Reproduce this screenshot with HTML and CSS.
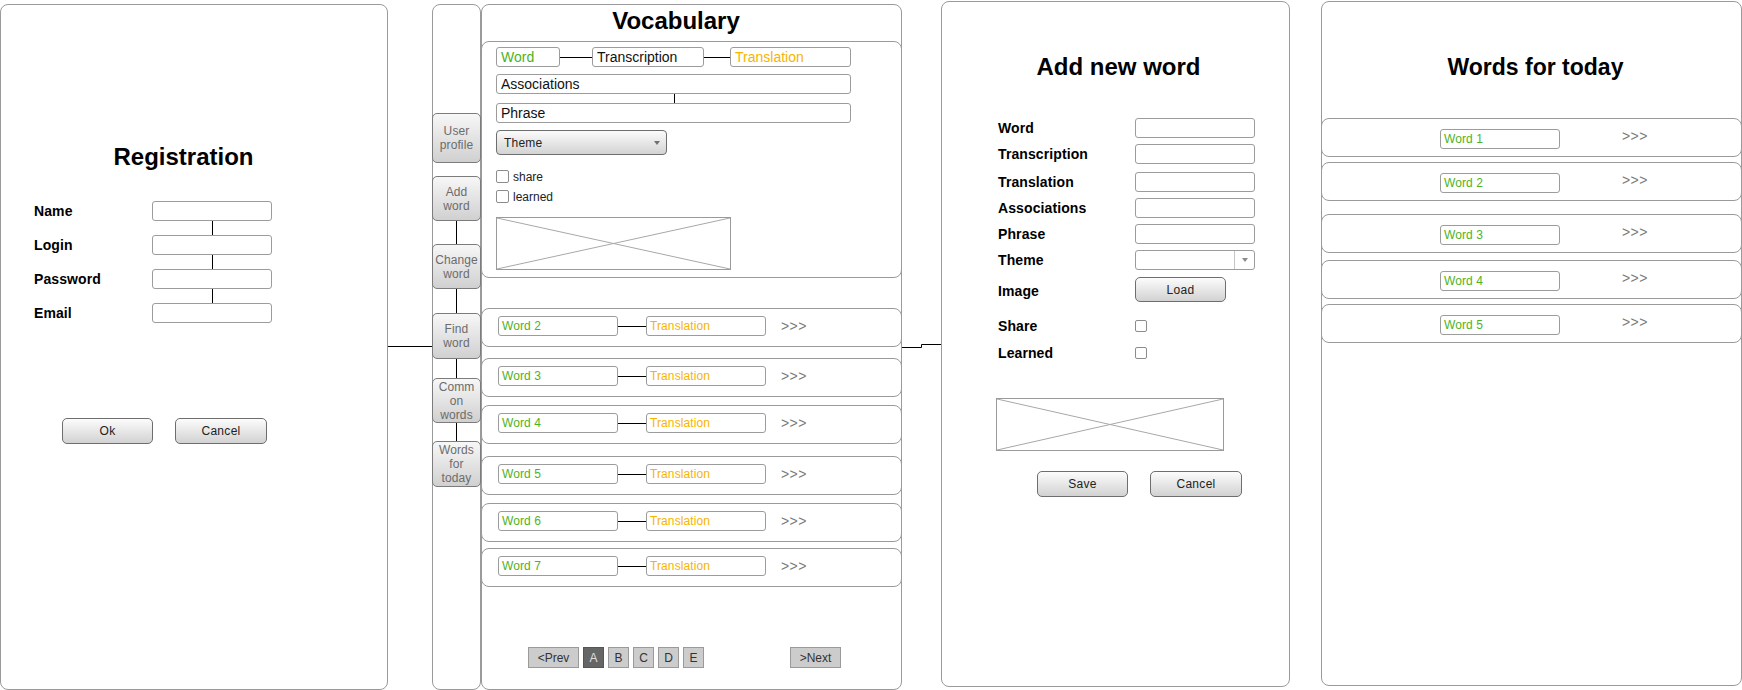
FILE: index.html
```html
<!DOCTYPE html>
<html>
<head>
<meta charset="utf-8">
<title>Vocabulary wireframe</title>
<link rel="stylesheet" href="styles.css">
</head>
<body>
<div class="canvas">

  <section class="panel reg">
    <h1 class="title reg-title">Registration</h1>
    <div class="reg-form">
      <span class="lbl">Name</span><div class="field"></div>
      <span class="lbl">Login</span><div class="field linked"></div>
      <span class="lbl">Password</span><div class="field linked"></div>
      <span class="lbl">Email</span><div class="field linked"></div>
    </div>
    <div class="reg-btns">
      <div class="btn">Ok</div>
      <div class="btn">Cancel</div>
    </div>
  </section>

  <nav class="panel nav">
    <div class="nav-btn nb1">User<br>profile</div>
    <div class="nav-btn nb2">Add<br>word</div>
    <div class="nav-btn nb3 linked">Change<br>word</div>
    <div class="nav-btn nb4 linked">Find<br>word</div>
    <div class="nav-btn nb5 linked">Comm<br>on<br>words</div>
    <div class="nav-btn nb6 linked">Words<br>for<br>today</div>
  </nav>

  <section class="panel vocab">
    <h1 class="title vocab-title">Vocabulary</h1>
    <div class="card edit-card">
      <div class="row1">
        <div class="inp big w64 green">Word</div>
        <div class="hline w32"></div>
        <div class="inp big w112">Transcription</div>
        <div class="hline w26"></div>
        <div class="inp big w121 orange">Translation</div>
      </div>
      <div class="inp big w355 assoc">Associations</div>
      <div class="vline"></div>
      <div class="inp big w355">Phrase</div>
      <div class="select"><span>Theme</span><span class="tri"></span></div>
      <div class="check share"><span class="cb"></span><span>share</span></div>
      <div class="check learned"><span class="cb"></span><span>learned</span></div>
      <div class="ph ph-vocab">
        <svg viewBox="0 0 235 53" preserveAspectRatio="none"><line x1="0" y1="0" x2="235" y2="53"/><line x1="0" y1="53" x2="235" y2="0"/></svg>
      </div>
    </div>

    <div class="word-list">
      <div class="card wrow"><div class="inp sm green">Word 2</div><div class="hline w28"></div><div class="inp sm orange">Translation</div><span class="arrows">&gt;&gt;&gt;</span></div>
      <div class="card wrow"><div class="inp sm green">Word 3</div><div class="hline w28"></div><div class="inp sm orange">Translation</div><span class="arrows">&gt;&gt;&gt;</span></div>
      <div class="card wrow"><div class="inp sm green">Word 4</div><div class="hline w28"></div><div class="inp sm orange">Translation</div><span class="arrows">&gt;&gt;&gt;</span></div>
      <div class="card wrow"><div class="inp sm green">Word 5</div><div class="hline w28"></div><div class="inp sm orange">Translation</div><span class="arrows">&gt;&gt;&gt;</span></div>
      <div class="card wrow"><div class="inp sm green">Word 6</div><div class="hline w28"></div><div class="inp sm orange">Translation</div><span class="arrows">&gt;&gt;&gt;</span></div>
      <div class="card wrow"><div class="inp sm green">Word 7</div><div class="hline w28"></div><div class="inp sm orange">Translation</div><span class="arrows">&gt;&gt;&gt;</span></div>
    </div>

    <div class="pager">
      <div class="pg wide">&lt;Prev</div>
      <div class="pg on">A</div>
      <div class="pg">B</div>
      <div class="pg">C</div>
      <div class="pg">D</div>
      <div class="pg">E</div>
      <div class="pg wide next">&gt;Next</div>
    </div>
  </section>

  <section class="panel add">
    <h1 class="title add-title">Add new word</h1>
    <div class="add-form">
      <div class="frow"><span class="lbl">Word</span><div class="field"></div></div>
      <div class="frow"><span class="lbl">Transcription</span><div class="field"></div></div>
      <div class="frow r-tr"><span class="lbl">Translation</span><div class="field"></div></div>
      <div class="frow"><span class="lbl">Associations</span><div class="field"></div></div>
      <div class="frow"><span class="lbl">Phrase</span><div class="field"></div></div>
      <div class="frow"><span class="lbl">Theme</span><div class="combo"><span class="combo-btn"><span class="tri"></span></span></div></div>
      <div class="frow r-img"><span class="lbl img-lbl">Image</span><div class="btn load">Load</div></div>
      <div class="frow r-share"><span class="lbl">Share</span><span class="cb cb12"></span></div>
      <div class="frow r-learned"><span class="lbl">Learned</span><span class="cb cb12"></span></div>
    </div>
    <div class="ph ph-add">
      <svg viewBox="0 0 227 52" preserveAspectRatio="none"><line x1="0" y1="0" x2="227" y2="52"/><line x1="0" y1="52" x2="227" y2="0"/></svg>
    </div>
    <div class="add-btns">
      <div class="btn save">Save</div>
      <div class="btn cancel">Cancel</div>
    </div>
  </section>

  <section class="panel today">
    <h1 class="title today-title">Words for today</h1>
    <div class="today-list">
      <div class="card trow"><div class="inp sm green">Word 1</div><span class="arrows">&gt;&gt;&gt;</span></div>
      <div class="card trow"><div class="inp sm green">Word 2</div><span class="arrows">&gt;&gt;&gt;</span></div>
      <div class="card trow"><div class="inp sm green">Word 3</div><span class="arrows">&gt;&gt;&gt;</span></div>
      <div class="card trow"><div class="inp sm green">Word 4</div><span class="arrows">&gt;&gt;&gt;</span></div>
      <div class="card trow"><div class="inp sm green">Word 5</div><span class="arrows">&gt;&gt;&gt;</span></div>
    </div>
  </section>

  <svg class="wires" width="1742" height="690" viewBox="0 0 1742 690">
    <path d="M388 346.5H432"/>
    <path d="M902 347.5H921.5V344.5H941"/>
  </svg>
</div>
</body>
</html>
```

FILE: styles.css
```css
* { box-sizing: border-box; margin: 0; padding: 0; }

body {
  margin: 0;
  background: #fff;
  font-family: "Liberation Sans", Arial, Helvetica, sans-serif;
  color: #111;
}

.canvas {
  position: relative;
  width: 1742px;
  height: 690px;
  overflow: hidden;
  background: #fff;
}

/* windows on the canvas */
.panel {
  position: absolute;
  display: flex;
  flex-direction: column;
  border: 1px solid #9a9a9a;
  border-radius: 8px;
  background: #fff;
}
.reg   { left: 0;      top: 4px; width: 388px; height: 686px; }
.nav   { left: 432px;  top: 4px; width: 49px;  height: 686px; z-index: 0; }
.vocab { left: 481px;  top: 4px; width: 421px; height: 686px; }
.add   { left: 941px;  top: 1px; width: 349px; height: 686px; }
.today { left: 1321px; top: 1px; width: 421px; height: 685px; }

.wires {
  position: absolute;
  left: 0;
  top: 0;
  pointer-events: none;
  z-index: 5;
}
.wires path { fill: none; stroke: #000; stroke-width: 1; }

/* titles */
.title {
  font-size: 24px;
  font-weight: bold;
  line-height: 28px;
  text-align: center;
  color: #000;
}
.reg-title   { margin-top: 138px; padding-right: 21px; }
.vocab-title { margin-top: 2px; padding-right: 31px; }
.add-title   { margin-top: 51px; padding-left: 6px; }
.today-title { margin-top: 51px; padding-left: 8px; font-size: 23px; }

/* labels and fields */
.lbl {
  font-size: 14px;
  font-weight: bold;
  line-height: 20px;
  color: #000;
  letter-spacing: 0.1px;
}
.field {
  position: relative;
  width: 120px;
  height: 20px;
  border: 1px solid #9c9c9c;
  border-radius: 3px;
  background: #fff;
}
.field.linked::before {
  content: "";
  position: absolute;
  left: 59px;
  bottom: calc(100% + 1px);
  width: 1px;
  height: 14px;
  background: #000;
}

/* buttons */
.btn {
  height: 26px;
  width: 91px;
  border: 1px solid #6e6e6e;
  border-radius: 5px;
  background: linear-gradient(#fcfcfc, #d2d2d2);
  font-size: 12px;
  letter-spacing: 0.3px;
  color: #222;
  display: flex;
  align-items: center;
  justify-content: center;
}

/* registration */
.reg-form {
  display: grid;
  grid-template-columns: 118px 120px;
  row-gap: 14px;
  align-items: center;
  margin: 30px 0 0 33px;
}
.reg-btns {
  display: flex;
  gap: 22px;
  margin: 95px 0 0 61px;
}
.reg-btns .btn:last-child { width: 92px; }

/* side navigation */
.nav-btn {
  position: relative;
  margin: 0 -1px;
  height: 45px;
  display: flex;
  align-items: center;
  justify-content: center;
  text-align: center;
  font-size: 12px;
  line-height: 14px;
  color: #6c6c6c;
  letter-spacing: 0.1px;
  border: 1px solid #7c7c7c;
  border-radius: 5px;
  background: linear-gradient(#f7f7f7, #d0d0d0);
}
.nav-btn.linked::before {
  content: "";
  position: absolute;
  left: 23px;
  bottom: 100%;
  width: 1px;
  height: 40px;
  background: #000;
  z-index: -1;
}
.nb1 { margin-top: 108px; height: 50px; }
.nb2 { margin-top: 13px; }
.nb3 { margin-top: 23px; }
.nb4 { margin-top: 24px; height: 46px; }
.nb5 { margin-top: 19px; }
.nb6 { margin-top: 18px; height: 46px; }

/* vocabulary */
.card {
  margin: 0 -1px;
  border: 1px solid #9a9a9a;
  border-radius: 8px;
  background: #fff;
}
.edit-card {
  margin-top: 6px;
  padding: 5px 14px 7px;
  display: flex;
  flex-direction: column;
  align-items: flex-start;
}
.inp {
  height: 20px;
  border: 1px solid #9c9c9c;
  border-radius: 3px;
  background: #fff;
  padding-left: 4px;
  color: #111;
  white-space: nowrap;
  overflow: hidden;
}
.inp.big { font-size: 14px; line-height: 18px; }
.inp.sm  { width: 120px; font-size: 12px; line-height: 18px; padding-left: 3px; letter-spacing: 0.1px; }
.green  { color: #4fb223; }
.orange { color: #f6b400; }

.w64  { width: 64px; }
.w112 { width: 112px; }
.w121 { width: 121px; }
.w355 { width: 355px; }

.row1 { display: flex; align-items: center; }
.hline { height: 1px; background: #000; flex: none; align-self: center; }
.w32 { width: 32px; }
.w26 { width: 26px; }
.w28 { width: 28px; }

.assoc { margin-top: 7px; }
.vline {
  width: 1px;
  height: 9px;
  margin-left: 178px;
  background: #000;
}

.select {
  margin-top: 7px;
  width: 171px;
  height: 25px;
  border: 1px solid #6e6e6e;
  border-radius: 4px;
  background: linear-gradient(#fbfbfb, #d3d3d3);
  display: flex;
  align-items: center;
  justify-content: space-between;
  padding: 0 6px 0 7px;
  font-size: 12px;
  letter-spacing: 0.2px;
  color: #222;
}
.tri {
  width: 0;
  height: 0;
  border-left: 3px solid transparent;
  border-right: 3px solid transparent;
  border-top: 4px solid #707070;
}

.check {
  display: flex;
  align-items: center;
  gap: 4px;
  height: 13px;
  font-size: 12px;
  color: #222;
}
.share   { margin-top: 15px; }
.learned { margin-top: 7px; }
.cb {
  width: 13px;
  height: 13px;
  border: 1px solid #8c8c8c;
  border-radius: 2px;
  background: #fff;
  flex: none;
}
.cb12 { width: 12px; height: 12px; }

.ph {
  border: 1px solid #9a9a9a;
  background: #fff;
}
.ph svg { display: block; width: 100%; height: 100%; }
.ph line { stroke: #a8a8a8; stroke-width: 1; vector-effect: non-scaling-stroke; }
.ph-vocab { margin-top: 14px; width: 235px; height: 53px; }

.word-list {
  display: flex;
  flex-direction: column;
  margin-top: 30px;
}
.wrow {
  height: 39px;
  display: flex;
  align-items: flex-start;
  padding: 7px 0 0 16px;
}
.wrow .hline { margin-top: 10px; align-self: flex-start; }
.wrow:nth-child(2) { margin-top: 11px; }
.wrow:nth-child(3) { margin-top: 8px; }
.wrow:nth-child(4) { margin-top: 12px; }
.wrow:nth-child(5) { margin-top: 8px; }
.wrow:nth-child(6) { margin-top: 6px; }

.arrows {
  font-size: 14px;
  line-height: 20px;
  color: #7a7a7a;
  letter-spacing: 0.4px;
}
.wrow .arrows { margin-left: 15px; }

.pager {
  display: flex;
  gap: 4px;
  margin: 60px 0 0 46px;
}
.pg {
  width: 21px;
  height: 21px;
  border: 1px solid #9a9a9a;
  background: #cccccc;
  font-size: 12px;
  color: #333;
  display: flex;
  align-items: center;
  justify-content: center;
}
.pg.wide { width: 51px; }
.pg.on { background: #666; border-color: #555; color: #ddd; }
.pg.next { margin-left: 82px; }

/* add new word */
.add-form {
  display: flex;
  flex-direction: column;
  gap: 6px;
  margin: 37px 0 0 56px;
}
.frow {
  display: flex;
  align-items: center;
  height: 20px;
}
.frow .lbl { width: 137px; flex: none; }
.r-tr      { margin-top: 2px; }
.r-img     { height: 25px; margin-top: 1px; }
.r-share   { margin-top: 8px; }
.r-learned { margin-top: 1px; }
.img-lbl { padding-top: 2px; }
.btn.load { width: 91px; height: 25px; }

.combo {
  width: 120px;
  height: 20px;
  border: 1px solid #9c9c9c;
  border-radius: 3px;
  background: #fff;
  display: flex;
  justify-content: flex-end;
}
.combo-btn {
  width: 20px;
  border-left: 1px solid #c4c4c4;
  display: flex;
  align-items: center;
  justify-content: center;
}
.combo-btn .tri { border-top-color: #8a8a8a; }

.ph-add { margin: 35px 0 0 54px; width: 228px; height: 53px; }
.add-btns {
  display: flex;
  gap: 22px;
  margin: 20px 0 0 95px;
}
.add-btns .btn { height: 26px; }
.add-btns .cancel { width: 92px; }

/* words for today */
.today-list {
  display: flex;
  flex-direction: column;
  margin-top: 37px;
}
.trow {
  height: 39px;
  display: flex;
  align-items: flex-start;
  padding: 10px 0 0 118px;
}
.trow .arrows { margin: -3px 0 0 62px; }
.trow:nth-child(2) { margin-top: 5px; }
.trow:nth-child(3) { margin-top: 13px; }
.trow:nth-child(4) { margin-top: 7px; }
.trow:nth-child(5) { margin-top: 5px; }
```
